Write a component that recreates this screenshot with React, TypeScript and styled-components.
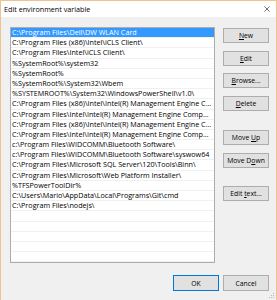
import styled, { createGlobalStyle } from "styled-components";

const GlobalStyle = createGlobalStyle`
  html, body {
    margin: 0;
    padding: 0;
    background: #f0f0f0;
  }
  body {
    font-family: "Open Sans", "Liberation Sans", sans-serif;
  }
`;

const paths = [
  "C:\\Program Files\\Dell\\DW WLAN Card",
  "C:\\Program Files (x86)\\Intel\\iCLS Client\\",
  "C:\\Program Files\\Intel\\iCLS Client\\",
  "%SystemRoot%\\system32",
  "%SystemRoot%",
  "%SystemRoot%\\System32\\Wbem",
  "%SYSTEMROOT%\\System32\\WindowsPowerShell\\v1.0\\",
  "C:\\Program Files (x86)\\Intel\\Intel(R) Management Engine Components\\DAL",
  "C:\\Program Files\\Intel\\Intel(R) Management Engine Components\\DAL",
  "C:\\Program Files (x86)\\Intel\\Intel(R) Management Engine Components\\IPT",
  "C:\\Program Files\\Intel\\Intel(R) Management Engine Components\\IPT",
  "c:\\Program Files\\WIDCOMM\\Bluetooth Software\\",
  "c:\\Program Files\\WIDCOMM\\Bluetooth Software\\syswow64",
  "C:\\Program Files\\Microsoft SQL Server\\120\\Tools\\Binn\\",
  "C:\\Program Files\\Microsoft\\Web Platform Installer\\",
  "%TFSPowerToolDir%",
  "C:\\Users\\Mario\\AppData\\Local\\Programs\\Git\\cmd",
  "C:\\Program Files\\nodejs\\",
];

const EMPTY_ROWS = 5;

// label, index of the access key letter, gap above
const sideButtons: { label: string; key: number; gap: number }[] = [
  { label: "New", key: 0, gap: 1 },
  { label: "Edit", key: 0, gap: 8 },
  { label: "Browse...", key: 0, gap: 7 },
  { label: "Delete", key: 0, gap: 8 },
  { label: "Move Up", key: 5, gap: 19 },
  { label: "Move Down", key: 6, gap: 8 },
  { label: "Edit text...", key: 5, gap: 18 },
];

const Label = ({ text, k }: { text: string; k: number }) => (
  <span>
    {text.slice(0, k)}
    <u>{text[k]}</u>
    {text.slice(k + 1)}
  </span>
);

const App = () => {
  return (
    <>
      <GlobalStyle />
      <Window>
        <TitleBar>
          <Title>Edit environment variable</Title>
          <CloseIcon viewBox="0 0 8 8">
            <path d="M0.5 0.5 L7.5 7.5 M7.5 0.5 L0.5 7.5" stroke="#111" strokeWidth="0.8" />
          </CloseIcon>
        </TitleBar>
        <Body>
          <Main>
            <ListBox>
              {paths.map((p, i) => (
                <Row key={i} selected={i === 0}>
                  {p}
                </Row>
              ))}
              {Array.from({ length: EMPTY_ROWS }).map((_, i) => (
                <Row key={"e" + i} selected={false} />
              ))}
            </ListBox>
            <ButtonColumn>
              {sideButtons.map((b) => (
                <Button key={b.label} style={{ marginTop: b.gap }}>
                  <Label text={b.label} k={b.key} />
                </Button>
              ))}
            </ButtonColumn>
          </Main>
          <Footer>
            <Button primary>OK</Button>
            <Button>Cancel</Button>
          </Footer>
          <Grip viewBox="0 0 6 6">
            <rect x="4" y="0" width="1" height="1" fill="#b8b8b8" />
            <rect x="2" y="2" width="1" height="1" fill="#b8b8b8" />
            <rect x="4" y="2" width="1" height="1" fill="#b8b8b8" />
            <rect x="0" y="4" width="1" height="1" fill="#b8b8b8" />
            <rect x="2" y="4" width="1" height="1" fill="#b8b8b8" />
            <rect x="4" y="4" width="1" height="1" fill="#b8b8b8" />
          </Grip>
        </Body>
      </Window>
    </>
  );
};

const Window = styled.div`
  position: relative;
  width: 277px;
  height: 300px;
  box-sizing: border-box;
  border: 1px solid #eec38c;
  border-bottom: none;
  display: flex;
  flex-direction: column;
  background: #f0f0f0;
  overflow: hidden;
`;

const TitleBar = styled.div`
  height: 16px;
  background: #ffffff;
  display: flex;
  align-items: center;
  justify-content: space-between;
  padding: 0 6px 0 3px;
`;

const Title = styled.span`
  font-size: 7.2px;
  color: #000;
`;

const CloseIcon = styled.svg`
  width: 6px;
  height: 6px;
`;

const Body = styled.div`
  flex: 1;
  display: flex;
  flex-direction: column;
  padding: 10px 7px 0 9px;
`;

const Main = styled.div`
  display: flex;
  gap: 8px;
`;

const ListBox = styled.div`
  width: 205px;
  height: 236px;
  box-sizing: border-box;
  border: 1px solid #adadad;
  background: #ffffff;
  overflow: hidden;
`;

const Row = styled.div<{ selected: boolean }>`
  height: 10.2px;
  box-sizing: border-box;
  padding: 0 2px 0 1px;
  font-size: 7.2px;
  line-height: 9.2px;
  white-space: nowrap;
  overflow: hidden;
  text-overflow: ellipsis;
  border-bottom: 1px solid #f0f0f0;
  color: ${(p) => (p.selected ? "#ffffff" : "#000000")};
  background: ${(p) => (p.selected ? "#3399ff" : "transparent")};
`;

const ButtonColumn = styled.div`
  display: flex;
  flex-direction: column;
`;

const Button = styled.div<{ primary?: boolean }>`
  width: 46px;
  height: 15px;
  box-sizing: border-box;
  display: flex;
  align-items: center;
  justify-content: center;
  background: #e1e1e1;
  border: 1px solid ${(p) => (p.primary ? "#0078d7" : "#adadad")};
  font-size: 6.8px;
  color: #000;
  white-space: pre;

  u {
    text-decoration-thickness: 0.5px;
    text-underline-offset: 1px;
  }
`;

const Footer = styled.div`
  display: flex;
  justify-content: flex-end;
  gap: 4px;
  margin-top: 12px;

  & > div {
    height: 16px;
  }
`;

const Grip = styled.svg`
  position: absolute;
  right: 1px;
  bottom: 1px;
  width: 6px;
  height: 6px;
`;

export default App;
